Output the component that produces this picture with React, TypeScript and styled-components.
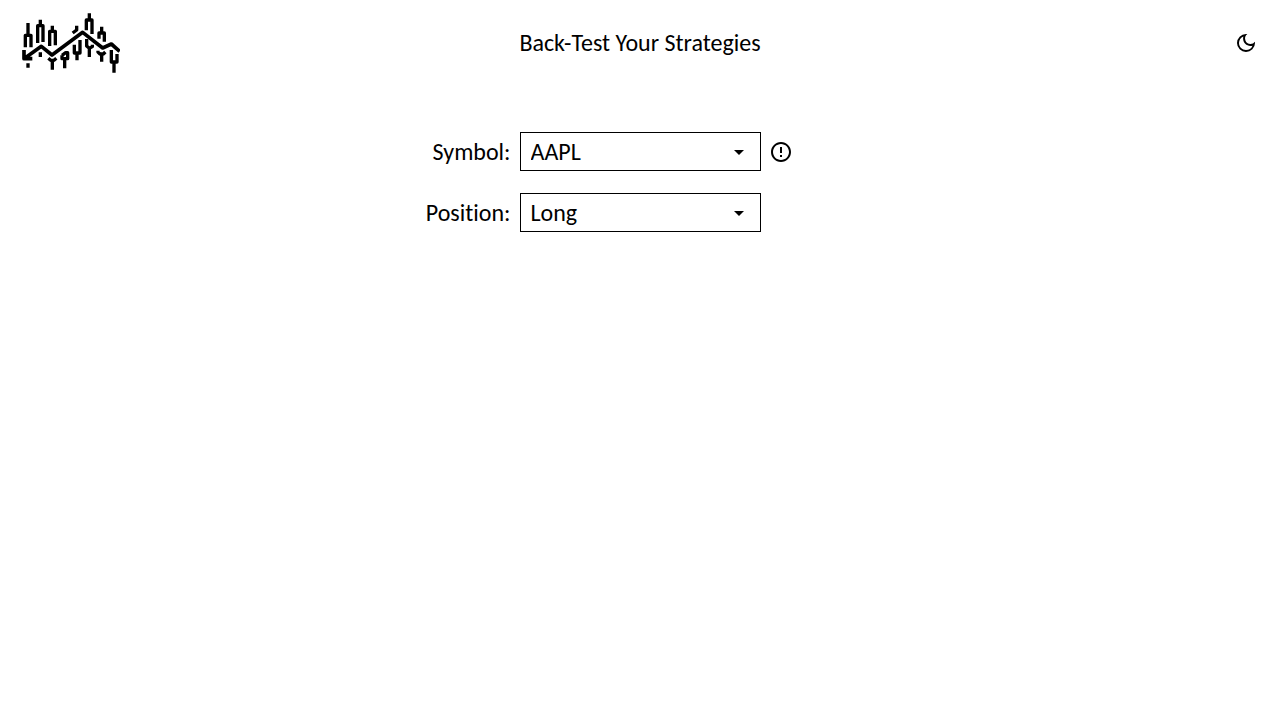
import React, { useState } from "react";
import styled, { createGlobalStyle } from "styled-components";
import { MdOutlineDarkMode, MdErrorOutline, MdArrowDropDown } from "react-icons/md";

const GlobalStyle = createGlobalStyle`
  *, *::before, *::after { box-sizing: border-box; }
  body {
    margin: 0;
    background: #fff;
    color: #000;
    font-family: Calibri, Carlito, Lato, sans-serif;
    font-size: 24px;
    line-height: 30px;
    font-variant-ligatures: none;
  }
`;

const Header = styled.header`
  display: grid;
  grid-template-columns: 1fr auto 1fr;
  align-items: center;
  height: 86px;
  padding: 0 22px;
`;

const HomeLink = styled.a`
  display: flex;
  justify-self: start;
  color: inherit;
`;

const Title = styled.h1`
  margin: 0;
  font-size: inherit;
  font-weight: 400;
`;

const IconButton = styled.button`
  display: flex;
  justify-self: start;
  padding: 0;
  border: 0;
  background: none;
  color: inherit;
  font-size: 24px;
  cursor: pointer;
`;

const ThemeButton = styled(IconButton)`
  justify-self: end;
`;

const InfoButton = styled(IconButton)`
  margin-left: 8px;
`;

const Form = styled.form`
  display: flex;
  flex-direction: column;
  gap: 22px;
  padding-top: 46px;
`;

const Field = styled.div`
  display: grid;
  grid-template-columns: 1fr 241px 1fr;
  align-items: center;
`;

const Label = styled.label`
  padding-right: 9px;
  text-align: right;
`;

const SelectBox = styled.div`
  display: grid;
  align-items: center;
`;

const Select = styled.select`
  grid-area: 1 / 1;
  width: 100%;
  height: 39px;
  padding: 0 40px 0 10px;
  border: 1px solid #000;
  border-radius: 0;
  background: #fff;
  color: inherit;
  font: inherit;
  appearance: none;
`;

const Arrow = styled(MdArrowDropDown)`
  grid-area: 1 / 1;
  justify-self: end;
  margin-right: 10px;
  pointer-events: none;
`;

const Logo = () => (
  <svg
    width="98"
    height="60"
    viewBox="18 15 294 180"
    fill="none"
    stroke="currentColor"
    strokeWidth="10"
    strokeLinejoin="round"
    aria-hidden="true"
  >
    {/* trend line with its arrow head */}
    <path
      strokeWidth="11"
      d="M24 126V152H49M24 152L76 115L108 141L200 73L260 120L286 108L311 130"
    />
    {/* candles above the line */}
    <path d="M28 118V82H45V118M36 82V45" />
    <path d="M65 105V53H81V102M73 53V35" />
    <path d="M101 114V70H118V112M109 70V53" />
    <path d="M170 75L182 66V53" />
    <path d="M211 67V36H228V78M220 36V16" />
    <path d="M249 92V75H265V101M257 75V56" />
    {/* candles below the line */}
    <path d="M36 166V179M73 133V147" />
    <path d="M97 151L104 157H114L121 151M109 157V185" />
    <path d="M138 142V152H155V134H149L138 142M146 152V181" />
    <path d="M175 110V135H192V96M183 135V157" />
    <path d="M212 93V114L220 121L229 116V110M220 121V147" />
    <path d="M246 128V132L252 138H262L268 132M257 138V161" />
    <path d="M286 126V162H303V138M294 162V194" />
  </svg>
);

export default function App() {
  const [symbol, setSymbol] = useState("AAPL");
  const [position, setPosition] = useState("Long");
  return (
    <>
      <GlobalStyle />
      <Header>
        <HomeLink href="#" aria-label="Home">
          <Logo />
        </HomeLink>
        <Title>Back-Test Your Strategies</Title>
        <ThemeButton type="button" aria-label="Dark mode">
          <MdOutlineDarkMode />
        </ThemeButton>
      </Header>
      <Form>
        <Field>
          <Label htmlFor="symbol">Symbol:</Label>
          <SelectBox>
            <Select id="symbol" value={symbol} onChange={(e) => setSymbol(e.target.value)}>
              <option>AAPL</option>
            </Select>
            <Arrow />
          </SelectBox>
          <InfoButton type="button" aria-label="Symbol information">
            <MdErrorOutline />
          </InfoButton>
        </Field>
        <Field>
          <Label htmlFor="position">Position:</Label>
          <SelectBox>
            <Select id="position" value={position} onChange={(e) => setPosition(e.target.value)}>
              <option>Long</option>
              <option>Short</option>
            </Select>
            <Arrow />
          </SelectBox>
        </Field>
      </Form>
    </>
  );
}
